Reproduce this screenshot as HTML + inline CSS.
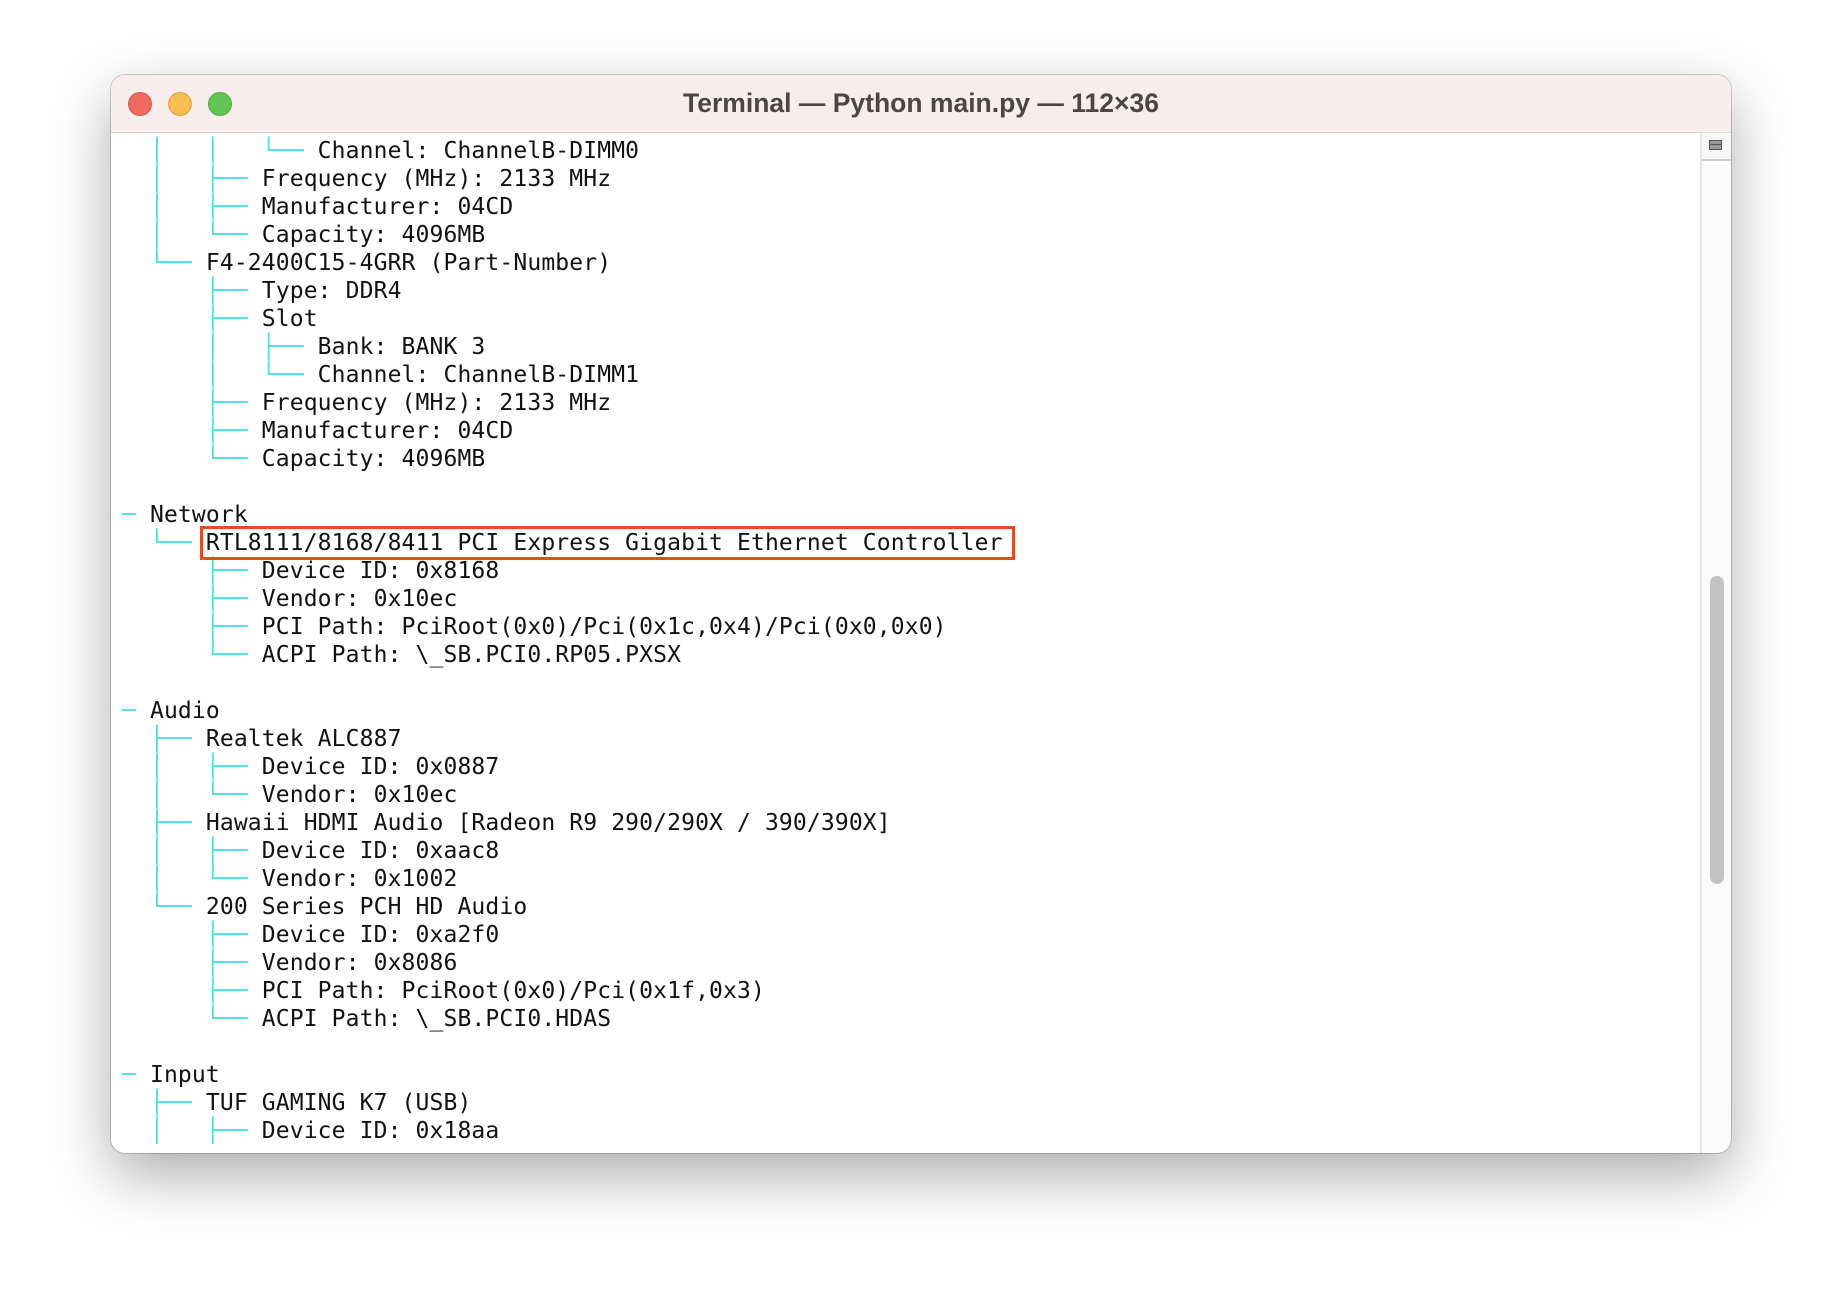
<!DOCTYPE html>
<html><head><meta charset="utf-8"><style>
html,body{margin:0;padding:0;width:1842px;height:1302px;background:#fff;overflow:hidden}
.win{position:absolute;left:111px;top:75px;width:1620px;height:1078px;border-radius:14px;background:#fff;box-shadow:0 22px 60px rgba(0,0,0,.33),0 0 0 1px rgba(0,0,0,.18);overflow:hidden}
.tb{position:absolute;left:0;top:0;right:0;height:57px;background:#f8eded;border-bottom:1px solid #ddd4d4}
.tl{position:absolute;top:17px;width:22px;height:22px;border-radius:50%}
.title{position:absolute;left:0;right:0;top:13px;text-align:center;font:bold 26.5px "Liberation Sans",sans-serif;color:#4b4646}
.sb{position:absolute;right:0;top:58px;width:29px;bottom:0;background:#fafafa;border-left:2px solid #e3e3e3}
.thumb{position:absolute;left:8px;width:14px;top:443px;height:308px;border-radius:7px;background:#c2c2c2}
.sbtop{position:absolute;left:0;top:0;width:29px;height:26px;border-bottom:2px solid #ccc;background:#f7f7f7}
.sbtop i{position:absolute;left:7px;top:7px;width:13px;height:10px;border:1px solid #555;background:#999;box-sizing:border-box}
.sbtop i:after{content:"";position:absolute;left:0;right:0;top:3px;height:1px;background:#555}
pre{position:absolute;left:11px;top:62px;margin:0;font:23px "DejaVu Sans Mono","Liberation Mono",monospace;line-height:28px;color:#111;letter-spacing:0.13px}
b{font-weight:normal;color:#4fdde6}
.box{position:absolute;left:89px;top:451px;width:809px;height:28px;border:3px solid #ea4a1f}
</style></head><body>
<div class="win">
<div class="tb">
<div class="tl" style="left:17px;background:#ee6a5e;border:1px solid #d25448"></div>
<div class="tl" style="left:57px;background:#f6be4f;border:1px solid #d9a23c"></div>
<div class="tl" style="left:97px;background:#62c554;border:1px solid #4ea842"></div>
<div class="title">Terminal — Python main.py — 112×36</div>
</div>
<div class="sb"><div class="sbtop"><i></i></div><div class="thumb"></div></div>
<pre><b>  │   │   └──</b> Channel: ChannelB-DIMM0
<b>  │   ├──</b> Frequency (MHz): 2133 MHz
<b>  │   ├──</b> Manufacturer: 04CD
<b>  │   └──</b> Capacity: 4096MB
<b>  └──</b> F4-2400C15-4GRR (Part-Number)
<b>      ├──</b> Type: DDR4
<b>      ├──</b> Slot
<b>      │   ├──</b> Bank: BANK 3
<b>      │   └──</b> Channel: ChannelB-DIMM1
<b>      ├──</b> Frequency (MHz): 2133 MHz
<b>      ├──</b> Manufacturer: 04CD
<b>      └──</b> Capacity: 4096MB

<b>─</b> Network
<b>  └──</b> RTL8111/8168/8411 PCI Express Gigabit Ethernet Controller
<b>      ├──</b> Device ID: 0x8168
<b>      ├──</b> Vendor: 0x10ec
<b>      ├──</b> PCI Path: PciRoot(0x0)/Pci(0x1c,0x4)/Pci(0x0,0x0)
<b>      └──</b> ACPI Path: \_SB.PCI0.RP05.PXSX

<b>─</b> Audio
<b>  ├──</b> Realtek ALC887
<b>  │   ├──</b> Device ID: 0x0887
<b>  │   └──</b> Vendor: 0x10ec
<b>  ├──</b> Hawaii HDMI Audio [Radeon R9 290/290X / 390/390X]
<b>  │   ├──</b> Device ID: 0xaac8
<b>  │   └──</b> Vendor: 0x1002
<b>  └──</b> 200 Series PCH HD Audio
<b>      ├──</b> Device ID: 0xa2f0
<b>      ├──</b> Vendor: 0x8086
<b>      ├──</b> PCI Path: PciRoot(0x0)/Pci(0x1f,0x3)
<b>      └──</b> ACPI Path: \_SB.PCI0.HDAS

<b>─</b> Input
<b>  ├──</b> TUF GAMING K7 (USB)
<b>  │   ├──</b> Device ID: 0x18aa</pre>
<div class="box"></div>
</div>
</body></html>
